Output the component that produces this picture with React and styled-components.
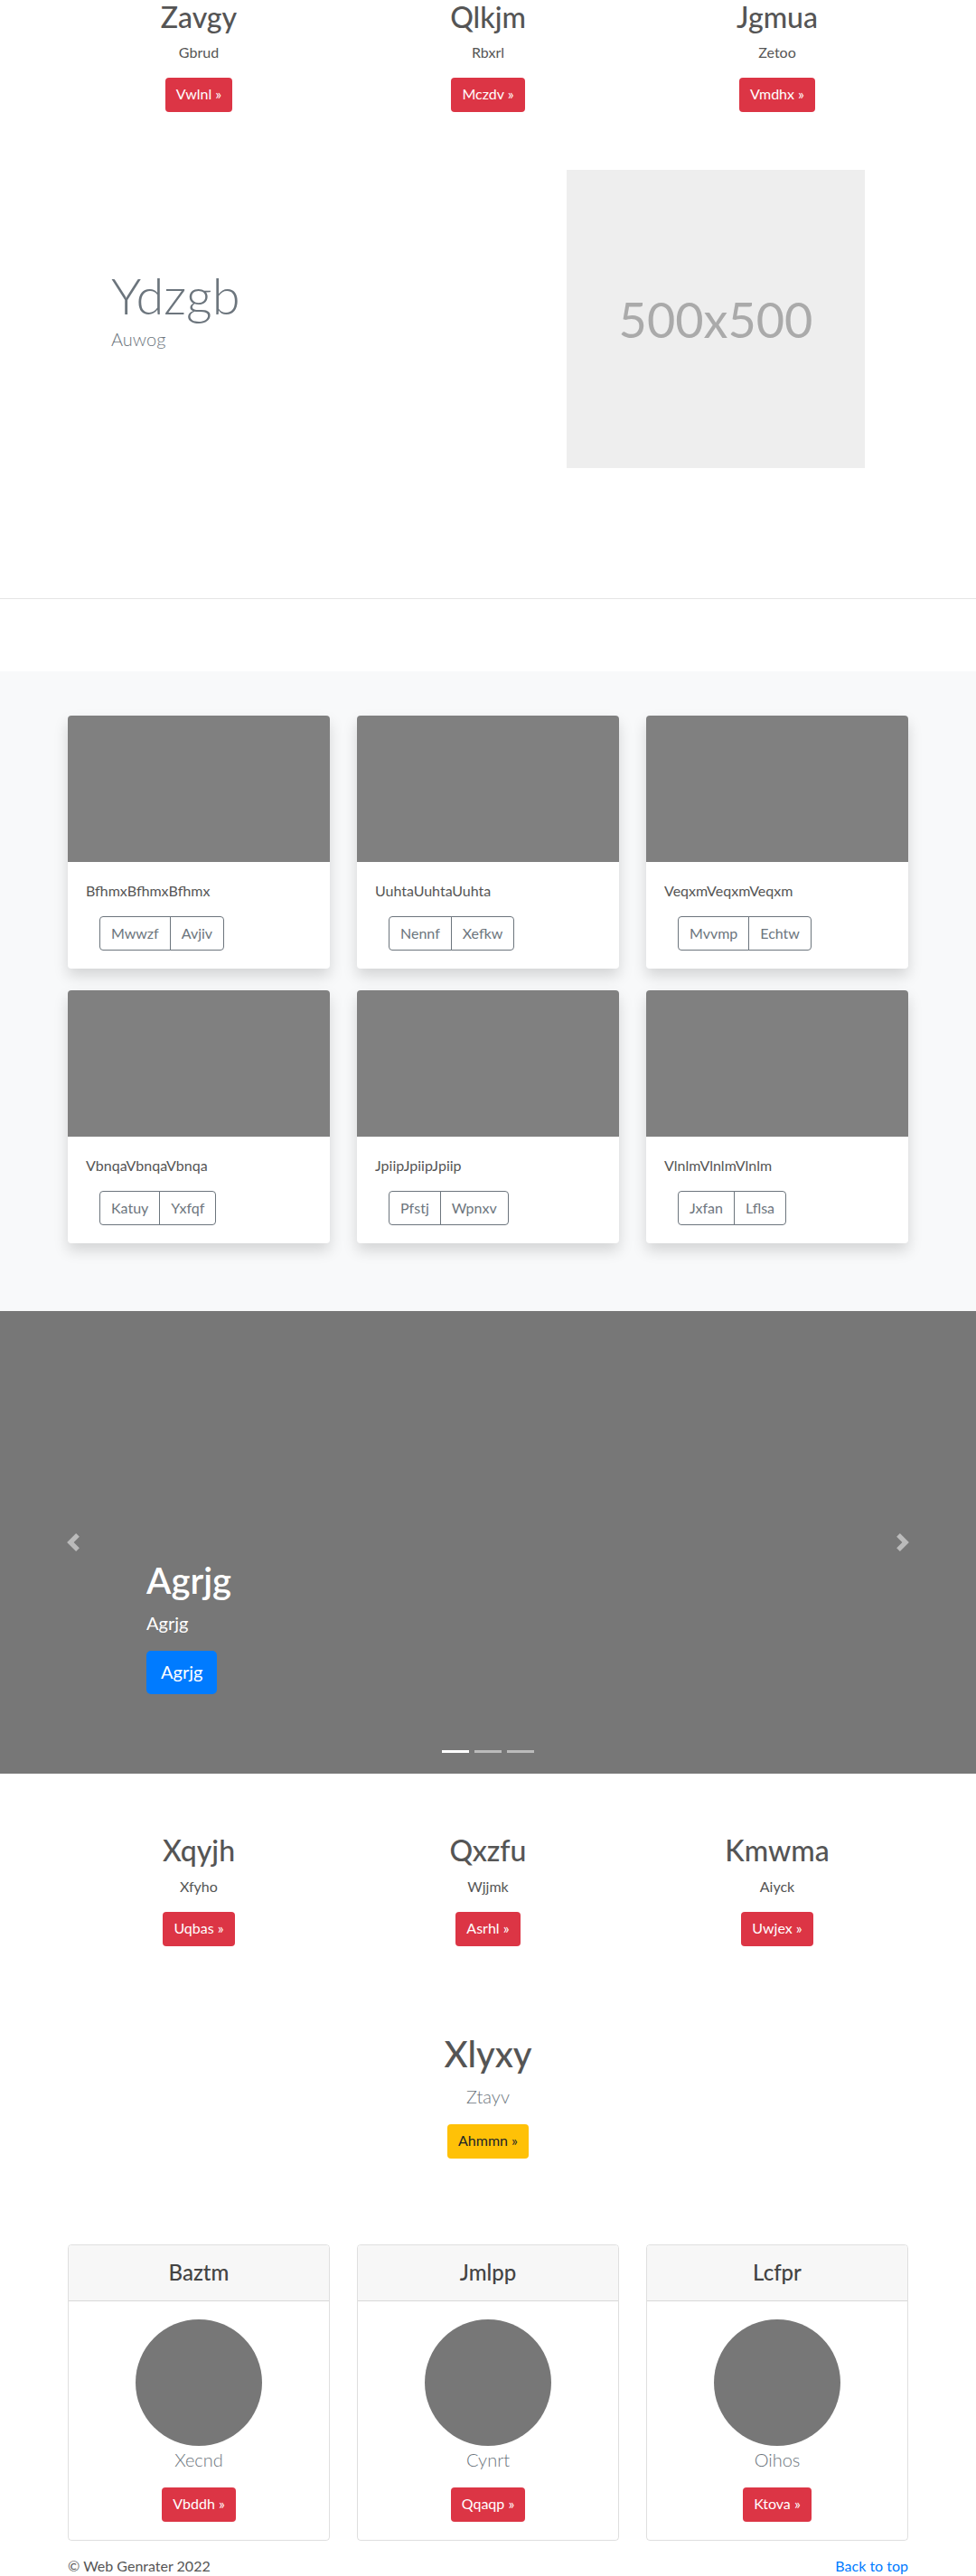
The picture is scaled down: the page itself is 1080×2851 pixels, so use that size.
import React from "react";
import styled, { createGlobalStyle } from "styled-components";

const GlobalStyle = createGlobalStyle`
  body {
    margin: 0;
    font-family: Lato, "Noto Sans", "Liberation Sans", sans-serif;
    font-size: 16px;
    line-height: 1.5;
    color: #555;
    background: #fff;
  }
  * { box-sizing: border-box; }
`;

const Container = styled.div`
  width: 930px;
  margin: 0 auto;
`;

const ThreeCols = styled.div`
  display: grid;
  grid-template-columns: repeat(3, 1fr);
  column-gap: 30px;
  row-gap: ${(p) => p.$rowGap || 0}px;
`;

const Col = styled.div`
  text-align: center;
`;

const H2 = styled.h2`
  margin: 0 0 8px;
  font-size: 32px;
  font-weight: 500;
  line-height: 1.2;
  color: #555;
`;

const Text = styled.p`
  margin: 0 0 16px;
  color: ${(p) => p.$color || "#555"};
`;

const Btn = styled.a`
  display: inline-block;
  height: ${(p) => (p.$lg ? 48 : 38)}px;
  padding: ${(p) => (p.$lg ? "8px 16px" : "6px 12px")};
  font-size: ${(p) => (p.$lg ? 20 : 16)}px;
  line-height: 1.5;
  border-radius: ${(p) => (p.$lg ? 5 : 4)}px;
  background: ${(p) => p.$bg || "#dc3545"};
  color: ${(p) => p.$fg || "#fff"};
  text-decoration: none;
`;

const Feature = styled.div`
  display: grid;
  grid-template-columns: 450px 450px;
  column-gap: 30px;
  align-items: center;
  margin-top: 64px;
  margin-bottom: 144px;
`;

const FeatureText = styled.div`
  padding-left: 48px;
  padding-bottom: 24px;
`;

const Display = styled.h1`
  margin: 0;
  font-size: 56px;
  font-weight: 300;
  line-height: 1.2;
  color: #6c757d;
`;

const Lead = styled.p`
  margin: 0 0 ${(p) => (p.$mb != null ? p.$mb : 16)}px;
  font-size: 20px;
  font-weight: ${(p) => p.$weight || 300};
  line-height: 1.5;
  color: ${(p) => p.$color || "#6c757d"};
`;

const Placeholder = styled.div`
  width: 330px;
  height: 330px;
  margin-left: 72px;
  background: #eee;
  display: flex;
  align-items: center;
  justify-content: center;
  color: #aaa;
  font-size: 54px;
`;

const Divider = styled.div`
  border-top: 1px solid #e5e5e5;
  margin-bottom: 80px;
`;

const Album = styled.section`
  background: #f8f9fa;
  padding: 49px 0 75px;
`;

const Card = styled.div`
  background: #fff;
  border-radius: 4px;
  overflow: hidden;
  box-shadow: 0 8px 16px rgba(0, 0, 0, 0.15);
`;

const CardImg = styled.div`
  height: 162px;
  background: #808080;
`;

const CardBody = styled.div`
  padding: 20px;
`;

const BtnGroup = styled.div`
  display: inline-flex;
  margin-left: 15px;
`;

const OutlineBtn = styled.a`
  height: 38px;
  padding: 6px 12px;
  border: 1px solid #6c757d;
  color: #6c757d;
  font-size: 16px;
  line-height: 1.5;
  &:first-child {
    border-radius: 4px 0 0 4px;
  }
  & + & {
    margin-left: -1px;
    border-radius: 0 4px 4px 0;
  }
`;

const Carousel = styled.section`
  position: relative;
  height: 512px;
  background: #777;
  margin-bottom: 66px;
  display: flex;
  flex-direction: column;
  justify-content: flex-end;
  padding: 0 15% 88px;
  color: #fff;
`;

const CaptionTitle = styled.h1`
  margin: 0 0 8px;
  font-size: 40px;
  font-weight: 600;
  line-height: 1.2;
`;

const Control = styled.span`
  position: absolute;
  top: 0;
  bottom: 0;
  ${(p) => (p.$right ? "right: 0;" : "left: 0;")}
  width: 15%;
  display: flex;
  align-items: center;
  justify-content: center;
  opacity: 0.5;
`;

const Indicators = styled.ol`
  position: absolute;
  left: 0;
  right: 0;
  bottom: 23px;
  margin: 0;
  padding: 0;
  list-style: none;
  display: flex;
  justify-content: center;
`;

const Indicator = styled.li`
  width: 30px;
  height: 3px;
  margin: 0 3px;
  background: ${(p) => (p.$active ? "#fff" : "rgba(255,255,255,0.5)")};
`;

const Center = styled.div`
  text-align: center;
  margin-top: 95px;
  margin-bottom: 95px;
`;

const BigTitle = styled.h1`
  margin: 0 0 8px;
  font-size: 40px;
  font-weight: 500;
  line-height: 1.2;
  color: #555;
`;

const PriceCard = styled.div`
  border: 1px solid rgba(0, 0, 0, 0.125);
  border-radius: 4px;
  text-align: center;
  overflow: hidden;
`;

const PriceHeader = styled.div`
  background: #f7f7f7;
  border-bottom: 1px solid rgba(0, 0, 0, 0.125);
  padding: 16px 20px;
`;

const H4 = styled.h4`
  margin: 0;
  font-size: 24px;
  font-weight: 500;
  line-height: 1.2;
  color: #444;
`;

const PriceBody = styled.div`
  padding: 20px;
`;

const Avatar = styled.div`
  width: 140px;
  height: 140px;
  margin: 0 auto;
  border-radius: 50%;
  background: #777;
`;

const Footer = styled.footer`
  display: flex;
  justify-content: space-between;
  margin-top: 16px;
  padding-bottom: 8px;
  color: #555;
`;

const Link = styled.a`
  color: #007bff;
  text-decoration: none;
`;

const Chevron = ({ right }) => (
  <svg width="20" height="20" viewBox="0 0 8 8" fill="#fff">
    <path
      d={
        right
          ? "M2.75 0l-1.5 1.5L3.75 4l-2.5 2.5L2.75 8l4-4-4-4z"
          : "M5.25 0l-4 4 4 4 1.5-1.5L4.25 4l2.5-2.5L5.25 0z"
      }
    />
  </svg>
);

const topCols = [
  ["Zavgy", "Gbrud", "Vwlnl"],
  ["Qlkjm", "Rbxrl", "Mczdv"],
  ["Jgmua", "Zetoo", "Vmdhx"],
];

const albumCards = [
  ["BfhmxBfhmxBfhmx", "Mwwzf", "Avjiv"],
  ["UuhtaUuhtaUuhta", "Nennf", "Xefkw"],
  ["VeqxmVeqxmVeqxm", "Mvvmp", "Echtw"],
  ["VbnqaVbnqaVbnqa", "Katuy", "Yxfqf"],
  ["JpiipJpiipJpiip", "Pfstj", "Wpnxv"],
  ["VlnlmVlnlmVlnlm", "Jxfan", "Lflsa"],
];

const midCols = [
  ["Xqyjh", "Xfyho", "Uqbas"],
  ["Qxzfu", "Wjjmk", "Asrhl"],
  ["Kmwma", "Aiyck", "Uwjex"],
];

const priceCards = [
  ["Baztm", "Xecnd", "Vbddh"],
  ["Jmlpp", "Cynrt", "Qqaqp"],
  ["Lcfpr", "Oihos", "Ktova"],
];

function App() {
  return (
    <>
      <GlobalStyle />
      <Container>
        <ThreeCols>
          {topCols.map(([t, s, b]) => (
            <Col key={t}>
              <H2>{t}</H2>
              <Text>{s}</Text>
              <Btn>{b} »</Btn>
            </Col>
          ))}
        </ThreeCols>

        <Feature>
          <FeatureText>
            <Display>Ydzgb</Display>
            <Lead $mb={0}>Auwog</Lead>
          </FeatureText>
          <Placeholder>500x500</Placeholder>
        </Feature>
      </Container>
      <Divider />

      <Album>
        <Container>
          <ThreeCols $rowGap={24}>
            {albumCards.map(([t, a, b]) => (
              <Card key={t}>
                <CardImg />
                <CardBody>
                  <Text>{t}</Text>
                  <BtnGroup>
                    <OutlineBtn>{a}</OutlineBtn>
                    <OutlineBtn>{b}</OutlineBtn>
                  </BtnGroup>
                </CardBody>
              </Card>
            ))}
          </ThreeCols>
        </Container>
      </Album>

      <Carousel>
        <div>
          <CaptionTitle>Agrjg</CaptionTitle>
          <Lead $color="#fff" $weight={400}>
            Agrjg
          </Lead>
          <Btn $lg $bg="#007bff">
            Agrjg
          </Btn>
        </div>
        <Control>
          <Chevron />
        </Control>
        <Control $right>
          <Chevron right />
        </Control>
        <Indicators>
          <Indicator $active />
          <Indicator />
          <Indicator />
        </Indicators>
      </Carousel>

      <Container>
        <ThreeCols>
          {midCols.map(([t, s, b]) => (
            <Col key={t}>
              <H2>{t}</H2>
              <Text>{s}</Text>
              <Btn>{b} »</Btn>
            </Col>
          ))}
        </ThreeCols>

        <Center>
          <BigTitle>Xlyxy</BigTitle>
          <Lead>Ztayv</Lead>
          <Btn $bg="#ffc107" $fg="#212529">
            Ahmmn »
          </Btn>
        </Center>

        <ThreeCols>
          {priceCards.map(([t, s, b]) => (
            <PriceCard key={t}>
              <PriceHeader>
                <H4>{t}</H4>
              </PriceHeader>
              <PriceBody>
                <Avatar />
                <Lead>{s}</Lead>
                <Btn>{b} »</Btn>
              </PriceBody>
            </PriceCard>
          ))}
        </ThreeCols>

        <Footer>
          <span>© Web Genrater 2022</span>
          <Link>Back to top</Link>
        </Footer>
      </Container>
    </>
  );
}

export default App;
